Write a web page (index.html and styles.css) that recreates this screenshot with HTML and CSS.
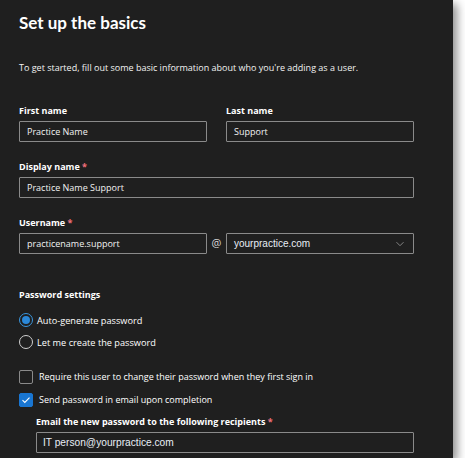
FILE: index.html
```html
<!DOCTYPE html>
<html lang="en">

<head>
    <meta charset="UTF-8">
    <meta name="viewport" content="width=device-width, initial-scale=1.0">
    <title>Set up the basics</title>
    <link rel="stylesheet" href="styles.css">
</head>

<body>
    <div class="panel">
        <h1 class="title">Set up the basics</h1>
        <p class="intro">To get started, fill out some basic information about who you're adding as a user.</p>

        <div class="row">
            <div class="field">
                <div class="label">First name</div>
                <div class="textbox">Practice Name</div>
            </div>
            <div class="field">
                <div class="label">Last name</div>
                <div class="textbox">Support</div>
            </div>
        </div>

        <div class="field spaced">
            <div class="label">Display name <span class="req">*</span></div>
            <div class="textbox">Practice Name Support</div>
        </div>

        <div class="field spaced">
            <div class="label">Username <span class="req">*</span></div>
            <div class="user-row">
                <div class="textbox">practicename.support</div>
                <div class="at">@</div>
                <div class="textbox select">
                    <span class="domain">yourpractice.com</span>
                    <svg class="chevron" width="10" height="6" viewBox="0 0 10 6">
                        <path d="M1.5 1.2 L5 4.7 L8.5 1.2" fill="none" stroke="#8f8f8f" stroke-width="0.9" />
                    </svg>
                </div>
            </div>
        </div>

        <div class="label section">Password settings</div>
        <div class="options">
            <div class="option">
                <span class="radio checked"></span>
                <span>Auto-generate password</span>
            </div>
            <div class="option">
                <span class="radio"></span>
                <span>Let me create the password</span>
            </div>
        </div>

        <div class="checks">
            <div class="check-row">
                <span class="box"></span>
                <span>Require this user to change their password when they first sign in</span>
            </div>
            <div class="check-row">
                <span class="box checked">
                    <svg width="10" height="8" viewBox="0 0 10 8">
                        <path d="M1.5 4.2 L3.8 6.4 L8.5 1.6" fill="none" stroke="#fff" stroke-width="1.1" />
                    </svg>
                </span>
                <span>Send password in email upon completion</span>
            </div>
        </div>

        <div class="field email">
            <div class="label">Email the new password to the following recipients <span class="req">*</span></div>
            <div class="textbox mail">IT person@yourpractice.com</div>
        </div>
    </div>
</body>

</html>
```

FILE: styles.css
```css
* {
    margin: 0;
    padding: 0;
    box-sizing: border-box;
}

body {
    background: #fff;
    font-family: "Open Sans", "Noto Sans", sans-serif;
    color: #fff;
}

.panel {
    width: 453px;
    height: 458px;
    background: #1f1f1f;
    padding: 10px 39px 0 19px;
    box-shadow: 4px 4px 9px rgba(0, 0, 0, 0.45);
}

.title {
    font-family: Lato, "Open Sans", sans-serif;
    font-size: 17px;
    line-height: 26px;
    font-weight: 700;
}

.intro {
    margin-top: 25px;
    font-size: 9px;
    line-height: 14px;
    color: #f2f2f2;
}

.row {
    margin-top: 29px;
    display: grid;
    grid-template-columns: 1fr 1fr;
    column-gap: 19px;
}

.field.spaced {
    margin-top: 18px;
}

.label {
    font-size: 9px;
    line-height: 14px;
    font-weight: 700;
    margin-bottom: 3px;
}

.req {
    color: #f1707b;
}

.textbox {
    height: 21px;
    border: 1px solid #8a8a8a;
    border-radius: 1px;
    padding: 0 7px;
    font-size: 9px;
    line-height: 19px;
    color: #f2f2f2;
}

.user-row {
    display: grid;
    grid-template-columns: 1fr 19px 1fr;
}

.at {
    text-align: center;
    font-size: 11px;
    line-height: 20px;
    color: #d8d8d8;
}

.select {
    display: flex;
    justify-content: space-between;
    align-items: center;
}

.domain,
.mail {
    font-family: "Liberation Sans", Arial, sans-serif;
    font-size: 10px;
    color: #e8eef6;
}

.chevron {
    margin-right: 1px;
}

.section {
    margin-top: 34px;
    margin-bottom: 0;
}

.options {
    margin-top: 7px;
}

.option {
    height: 22px;
    display: flex;
    align-items: center;
    gap: 4px;
    font-size: 9.2px;
}

.radio {
    width: 14px;
    height: 14px;
    border-radius: 50%;
    border: 1px solid #d0d0d0;
    display: flex;
    align-items: center;
    justify-content: center;
}

.radio.checked {
    border-color: #3a96dd;
}

.radio.checked::after {
    content: "";
    width: 8px;
    height: 8px;
    border-radius: 50%;
    background: #2b88d8;
}

.checks {
    margin-top: 12px;
}

.check-row {
    height: 23px;
    display: flex;
    align-items: center;
    gap: 6px;
    font-size: 9px;
}

.box {
    width: 14px;
    height: 14px;
    border: 1px solid #8a8a8a;
    border-radius: 2px;
    display: flex;
    align-items: center;
    justify-content: center;
}

.box.checked {
    background: #1976d2;
    border-color: #1976d2;
}

.email {
    margin-top: 4px;
    margin-left: 17px;
}

.mail {
    padding-left: 6px;
    font-size: 10.2px;
}
```
